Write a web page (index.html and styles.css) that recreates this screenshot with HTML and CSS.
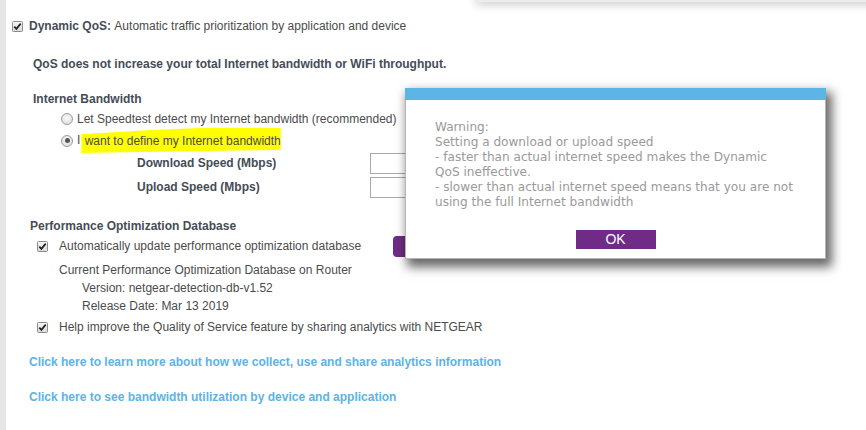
FILE: index.html
```html
<!DOCTYPE html>
<html>
<head>
<meta charset="utf-8">
<title>Dynamic QoS</title>
<link rel="stylesheet" href="styles.css">
</head>
<body>
<div class="page">
  <div class="topbar"></div>
  <main class="main">
    <div class="row r-qos">
      <span class="cb"><svg width="11" height="11" viewBox="0 0 11 11"><defs><linearGradient id="g1" x1="0" y1="0" x2="0" y2="1"><stop offset="0" stop-color="#f6f6f6"/><stop offset="1" stop-color="#d9d9d9"/></linearGradient></defs><rect x="0.5" y="0.5" width="10" height="10" rx="1" fill="url(#g1)" stroke="#8c8c8c"/><path d="M2.3 5.6 L4.4 7.9 L8.7 2.6" fill="none" stroke="#222" stroke-width="1.7"/></svg></span>
      <b class="lbl">Dynamic QoS:</b>&nbsp;Automatic traffic prioritization by application and device
    </div>
    <div class="row r-note"><b class="lbl">QoS does not increase your total Internet bandwidth or WiFi throughput.</b></div>
    <div class="row r-head"><b class="lbl">Internet Bandwidth</b></div>
    <div class="row r-radio"><span class="radio"></span>Let Speedtest detect my Internet bandwidth (recommended)</div>
    <div class="row r-radio r-radio2"><span class="radio on"></span>I<span class="hl"> want to define my Internet bandwidth</span></div>
    <div class="speeds">
      <b class="lbl">Download Speed (Mbps)</b><span class="field"></span>
      <b class="lbl">Upload Speed (Mbps)</b><span class="field"></span>
    </div>
    <div class="row r-perf"><b class="lbl">Performance Optimization Database</b></div>
    <div class="row r-auto">
      <span class="cb cb2"><svg width="11" height="11" viewBox="0 0 11 11"><defs><linearGradient id="g2" x1="0" y1="0" x2="0" y2="1"><stop offset="0" stop-color="#f6f6f6"/><stop offset="1" stop-color="#d9d9d9"/></linearGradient></defs><rect x="0.5" y="0.5" width="10" height="10" rx="1" fill="url(#g2)" stroke="#8c8c8c"/><path d="M2.3 5.6 L4.4 7.9 L8.7 2.6" fill="none" stroke="#222" stroke-width="1.7"/></svg></span>
      <span>Automatically update performance optimization database</span>
      <span class="btn-update"></span>
    </div>
    <div class="row r-current">Current Performance Optimization Database on Router</div>
    <div class="row r-ver">Version: netgear-detection-db-v1.52</div>
    <div class="row r-ver">Release Date: Mar 13 2019</div>
    <div class="row r-help">
      <span class="cb cb2"><svg width="11" height="11" viewBox="0 0 11 11"><defs><linearGradient id="g3" x1="0" y1="0" x2="0" y2="1"><stop offset="0" stop-color="#f6f6f6"/><stop offset="1" stop-color="#d9d9d9"/></linearGradient></defs><rect x="0.5" y="0.5" width="10" height="10" rx="1" fill="url(#g3)" stroke="#8c8c8c"/><path d="M2.3 5.6 L4.4 7.9 L8.7 2.6" fill="none" stroke="#222" stroke-width="1.7"/></svg></span>
      <span>Help improve the Quality of Service feature by sharing analytics with NETGEAR</span>
    </div>
    <div class="row r-link"><a class="link">Click here to learn more about how we collect, use and share analytics information</a></div>
    <div class="row r-link"><a class="link">Click here to see bandwidth utilization by device and application</a></div>
  </main>
  <div class="dialog">
    <div class="dialog-bar"></div>
    <div class="dialog-body">
      <div class="dialog-text">Warning:<br>Setting a download or upload speed<br>- faster than actual internet speed makes the Dynamic<br>QoS ineffective.<br>- slower than actual internet speed means that you are not<br>using the full Internet bandwidth</div>
      <div class="dialog-actions"><span class="ok">OK</span></div>
    </div>
  </div>
</div>
</body>
</html>
```

FILE: styles.css
```css
html, body {
  margin: 0;
  padding: 0;
  background: #fff;
}
body {
  font-family: "Liberation Sans", Arial, sans-serif;
  font-size: 12px;
  color: #4b4b4b;
  overflow: hidden;
}
.page {
  position: relative;
  height: 430px;
  border-left: 6px solid #e6e6e6;
  box-sizing: border-box;
  overflow: hidden;
}
.topbar {
  position: absolute;
  left: 470px;
  right: -20px;
  top: -5px;
  height: 7px;
  background: #ececec;
  box-shadow: 0 2px 10px rgba(0, 0, 0, 0.25);
}
.main {
  padding-top: 17px;
}
.row {
  height: 18px;
  line-height: 18px;
  white-space: nowrap;
  display: flex;
  align-items: center;
}
.lbl {
  font-weight: bold;
  color: #454c57;
}
.cb {
  display: inline-flex;
  width: 11px;
  height: 11px;
  margin-right: 6px;
}
.cb2 {
  margin-right: 11px;
}
.r-qos {
  padding-left: 6px;
}
.r-note {
  margin-top: 20px;
  padding-left: 27px;
}
.r-head {
  margin-top: 17px;
  padding-left: 27px;
}
.r-radio {
  height: 22px;
  line-height: 22px;
  padding-left: 55px;
}
.r-radio2 {
  height: 21px;
  line-height: 21px;
}
.radio {
  display: inline-block;
  width: 10px;
  height: 10px;
  border-radius: 50%;
  border: 1px solid #9b9b9b;
  background: radial-gradient(circle at 50% 40%, #fafafa 0, #e6e6e6 60%, #d4d4d4 100%);
  margin-right: 4px;
  position: relative;
}
.radio.on::after {
  content: "";
  position: absolute;
  left: 2.5px;
  top: 2.5px;
  width: 5px;
  height: 5px;
  border-radius: 50%;
  background: #555;
}
.hl {
  background: #ffff00;
  padding: 6px 0 5px;
  margin-left: 1px;
  line-height: 14px;
  clip-path: polygon(0 25%, 35% 8%, 60% 0, 100% 0, 100% 88%, 60% 92%, 0 100%);
  white-space: pre;
}
.speeds {
  display: grid;
  grid-template-columns: 233px 60px;
  grid-auto-rows: 24px;
  align-items: center;
  padding-left: 131px;
}
.field {
  display: block;
  height: 19px;
  border: 1px solid #a9a9a9;
  background: #fff;
}
.r-perf {
  margin-top: 18px;
  padding-left: 24px;
}
.r-auto {
  height: 22px;
  padding-left: 31px;
}
.btn-update {
  display: inline-block;
  margin-left: 32px;
  width: 100px;
  height: 21px;
  border-radius: 4px;
  background: #6f2c85;
}
.r-current {
  margin-top: 4px;
  padding-left: 53px;
}
.r-ver {
  padding-left: 76px;
}
.r-help {
  margin-top: 3px;
  padding-left: 31px;
}
.r-link {
  margin-top: 17px;
  padding-left: 23px;
}
.link {
  color: #5cb3e6;
  font-weight: bold;
  text-decoration: none;
}
.dialog {
  position: absolute;
  left: 399px;
  top: 88px;
  width: 419px;
  height: 170px;
  background: #fff;
  border: 1px solid #b5b5b5;
  border-top: none;
  box-shadow: 4px 6px 10px 2px rgba(0, 0, 0, 0.6);
}
.dialog-bar {
  height: 12px;
  background: #5cb5e5;
  margin: 0 -1px;
}
.dialog-body {
  padding: 20px 0 0 29px;
}
.dialog-text {
  font-family: "DejaVu Sans", Tahoma, Verdana, sans-serif;
  font-size: 12.1px;
  line-height: 15px;
  color: #9a9a9a;
  white-space: nowrap;
}
.dialog-actions {
  display: flex;
  justify-content: center;
  margin-top: 20px;
  margin-left: -29px;
}
.ok {
  display: block;
  width: 80px;
  height: 19px;
  line-height: 19px;
  text-align: center;
  background: #6f2b85;
  color: #fff;
  font-family: "Liberation Sans", Arial, sans-serif;
  font-size: 14px;
}
```
